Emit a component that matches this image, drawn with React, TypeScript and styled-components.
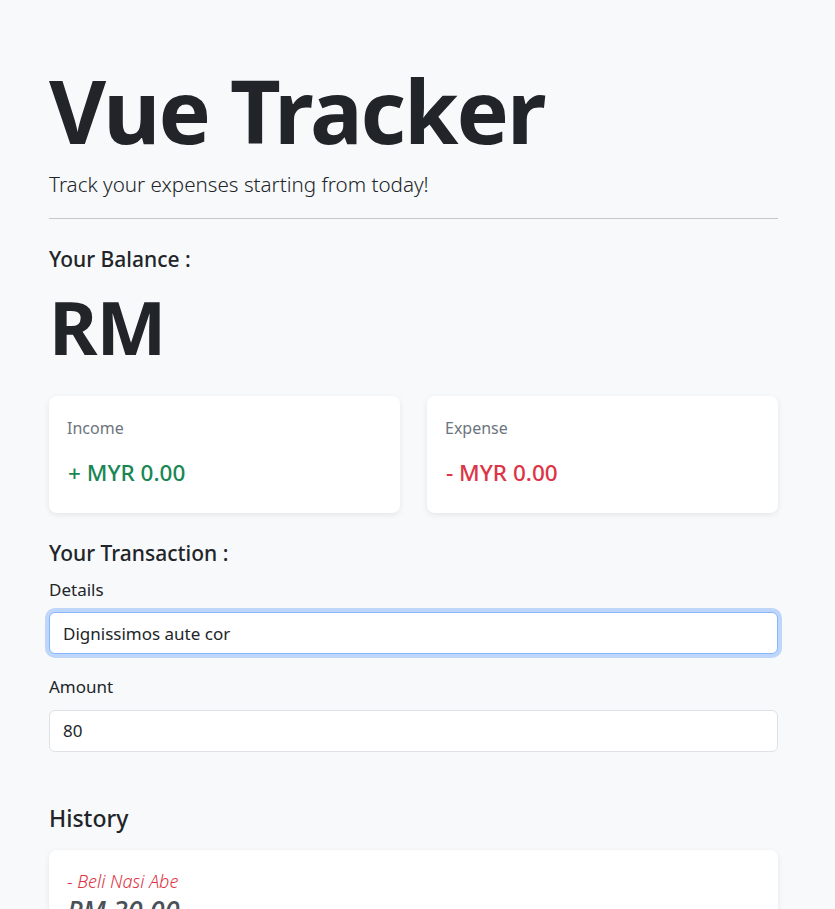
import React from "react";
import styled, { createGlobalStyle } from "styled-components";

const Global = createGlobalStyle`
  html, body { margin: 0; padding: 0; }
  body {
    background: #f8f9fa;
    color: #212529;
    font-family: "Noto Sans", "Open Sans", sans-serif;
    font-size: 16px;
    line-height: 1.5;
  }
  * { box-sizing: border-box; }
`;

const Page = styled.main`
  width: 729px;
  margin-left: 49px;
  padding-top: 58px;
`;

const Title = styled.h1`
  margin: 0;
  font-size: 88px;
  font-weight: 700;
  line-height: 1.2;
  letter-spacing: -2px;
`;

const Lead = styled.p`
  margin: 5px 0 0;
  font-size: 20.6px;
  font-weight: 300;
  line-height: 1.5;
`;

const Rule = styled.hr`
  margin: 19px 0 28px;
  border: 0;
  border-top: 1px solid #c6c7c8;
`;

const SectionTitle = styled.h5`
  margin: 0 0 10px;
  font-size: 21px;
  font-weight: 500;
  line-height: 1.2;
`;

const Balance = styled.h1`
  margin: 1px 0 25px;
  font-size: 74px;
  font-weight: 700;
  line-height: 1.2;
  letter-spacing: -1px;
`;

const CardRow = styled.div`
  display: grid;
  grid-template-columns: 1fr 1fr;
  gap: 27px;
  margin-bottom: 28px;
`;

const Card = styled.div`
  background: #fff;
  border-radius: 8px;
  box-shadow: 0 2px 6px rgba(0, 0, 0, 0.08);
  padding: 20px 18px 27px;
`;

const CardLabel = styled.div`
  color: #6c757d;
  font-size: 16px;
  line-height: 1.5;
  margin-bottom: 19px;
`;

const Amount = styled.div<{ $tone: "in" | "out" }>`
  color: ${(p) => (p.$tone === "in" ? "#198754" : "#dc3545")};
  font-size: 22.5px;
  font-weight: 500;
  line-height: 1.2;
  padding-left: 1px;
`;

const Field = styled.div`
  display: flex;
  flex-direction: column;
  gap: 10px;
  margin-bottom: 20px;
`;

const Label = styled.label`
  font-size: 17px;
  line-height: 1.5;
`;

const Input = styled.input<{ $focus?: boolean }>`
  width: 100%;
  height: 42px;
  padding: 8px 13px;
  font: inherit;
  font-size: 17px;
  color: #212529;
  background: #fff;
  border: 1px solid ${(p) => (p.$focus ? "#86b7fe" : "#dee2e6")};
  border-radius: 6px;
  outline: none;
  box-shadow: ${(p) => (p.$focus ? "0 0 0 4px rgba(13,110,253,0.25)" : "none")};
`;

const HistoryTitle = styled.h5`
  margin: 53px 0 18px;
  font-size: 23px;
  font-weight: 500;
  line-height: 1.2;
`;

const HistoryCard = styled.div`
  background: #fff;
  border-radius: 8px;
  box-shadow: 0 2px 6px rgba(0, 0, 0, 0.08);
  padding: 18px 18px 20px;
`;

const HistoryName = styled.div`
  color: #dc3545;
  font-style: italic;
  font-weight: 300;
  font-size: 18px;
  line-height: 1.5;
`;

const HistoryAmount = styled.div`
  color: #495057;
  font-size: 27px;
  font-style: italic;
  font-weight: 500;
  line-height: 1.2;
`;

export default function App() {
  return (
    <>
      <Global />
      <Page>
        <Title>Vue Tracker</Title>
        <Lead>Track your expenses starting from today!</Lead>
        <Rule />
        <SectionTitle>Your Balance :</SectionTitle>
        <Balance>RM</Balance>
        <CardRow>
          <Card>
            <CardLabel>Income</CardLabel>
            <Amount $tone="in">+ MYR 0.00</Amount>
          </Card>
          <Card>
            <CardLabel>Expense</CardLabel>
            <Amount $tone="out">- MYR 0.00</Amount>
          </Card>
        </CardRow>
        <SectionTitle>Your Transaction :</SectionTitle>
        <Field>
          <Label>Details</Label>
          <Input $focus defaultValue="Dignissimos aute cor" />
        </Field>
        <Field>
          <Label>Amount</Label>
          <Input type="number" defaultValue="80" />
        </Field>
        <HistoryTitle>History</HistoryTitle>
        <HistoryCard>
          <HistoryName>- Beli Nasi Abe</HistoryName>
          <HistoryAmount>RM 30.00</HistoryAmount>
        </HistoryCard>
      </Page>
    </>
  );
}
